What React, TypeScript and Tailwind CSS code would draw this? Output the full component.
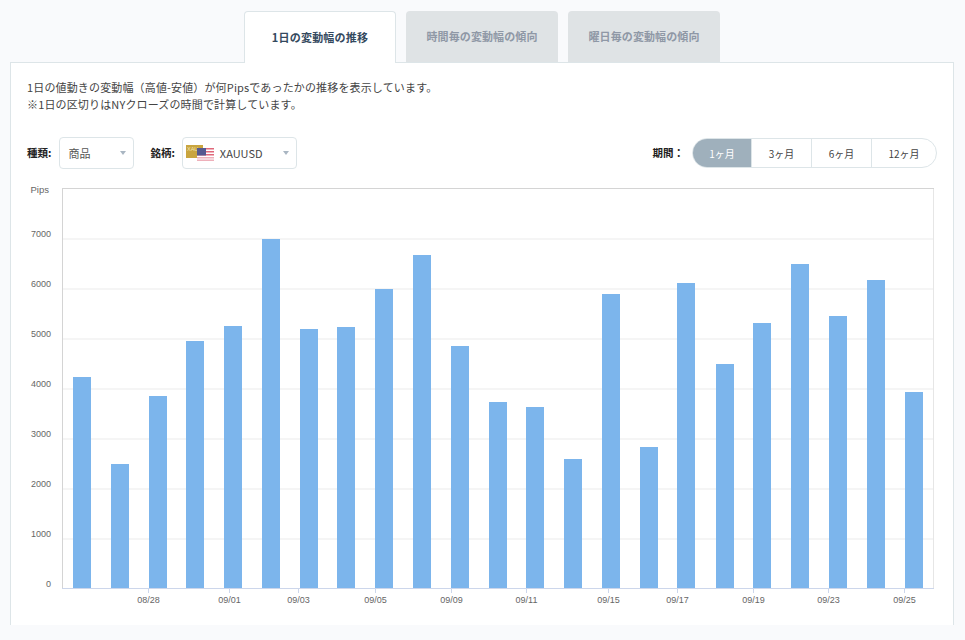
const font = "font-['Noto_Sans_CJK_JP','Noto_Sans',sans-serif]";

const tops = [377, 464, 396, 341, 326, 239, 329, 327, 289, 255, 346, 402, 407, 459, 294, 447, 283, 364, 323, 264, 316, 280, 392];
const barX = [73, 111, 149, 186, 224, 262, 300, 337, 375, 413, 451, 489, 526, 564, 602, 640, 677, 716, 753, 791, 829, 867, 905];
const yLabels = [
  { label: "7000", y: 239 },
  { label: "6000", y: 289 },
  { label: "5000", y: 339 },
  { label: "4000", y: 389 },
  { label: "3000", y: 439 },
  { label: "2000", y: 489 },
  { label: "1000", y: 539 },
];
const xLabels = [
  { label: "08/28", x: 148 },
  { label: "09/01", x: 229 },
  { label: "09/03", x: 298 },
  { label: "09/05", x: 375 },
  { label: "09/09", x: 451 },
  { label: "09/11", x: 526 },
  { label: "09/15", x: 608 },
  { label: "09/17", x: 677 },
  { label: "09/19", x: 753 },
  { label: "09/23", x: 828 },
  { label: "09/25", x: 904 },
];

// chart svg is placed at page x=11, y=180, so coordinates below subtract that
const ox = 11;
const oy = 180;

const Chart = () => (
  <svg width="942" height="440" className="block" fontFamily="'Liberation Sans', sans-serif">
    <rect x={62 - ox} y={188 - oy} width={871} height={400} fill="#fff" />
    {yLabels.map((l) => (
      <g key={l.label}>
        <line x1={62 - ox} x2={933 - ox} y1={l.y - oy} y2={l.y - oy} stroke="#f5f5f5" strokeWidth="2" />
        <text x={51 - ox} y={l.y - oy - 2} fontSize="9" fill="#666" textAnchor="end">{l.label}</text>
      </g>
    ))}
    <text x={49 - ox} y={193 - oy} fontSize="9.5" fill="#666" textAnchor="end">Pips</text>
    <text x={51 - ox} y={587 - oy} fontSize="9" fill="#666" textAnchor="end">0</text>
    {xLabels.map((l) => (
      <g key={l.label}>
        <line x1={l.x - ox + 0.5} x2={l.x - ox + 0.5} y1={588 - oy} y2={593 - oy} stroke="#ccd6eb" />
        <text x={l.x - ox + 0.5} y={603 - oy} fontSize="9" fill="#666" textAnchor="middle">{l.label}</text>
      </g>
    ))}
    {tops.map((t, i) => (
      <rect key={i} x={barX[i] - ox} y={t - oy} width={18} height={588 - t} fill="#7cb5ec" />
    ))}
    <line x1={62.5 - ox} x2={62.5 - ox} y1={188 - oy} y2={588 - oy} stroke="#d4d4d4" />
    <line x1={933.5 - ox} x2={933.5 - ox} y1={188 - oy} y2={588 - oy} stroke="#e6e6e6" />
    <line x1={62 - ox} x2={934 - ox} y1={188.5 - oy} y2={188.5 - oy} stroke="#d4d4d4" />
    <line x1={62 - ox} x2={934 - ox} y1={588.5 - oy} y2={588.5 - oy} stroke="#ccd6eb" />
  </svg>
);

const PairFlag = () => (
  <svg width="28" height="17" viewBox="0 0 28 17" className="shrink-0">
    <rect x="0" y="0" width="17" height="13" fill="#c9a53f" />
    <text x="1" y="6" fontSize="5.5" fill="#f3e4b0" fontFamily="'Liberation Sans', sans-serif">XAU</text>
    <rect x="11" y="3" width="17" height="13" fill="#fff" />
    <rect x="11" y="3" width="17" height="1.5" fill="#e0687a" />
    <rect x="11" y="6" width="17" height="1.5" fill="#e0687a" />
    <rect x="11" y="9" width="17" height="1.5" fill="#e0687a" />
    <rect x="11" y="12" width="17" height="1.5" fill="#eeb0ba" />
    <rect x="11" y="14.5" width="17" height="1.5" fill="#eeb0ba" />
    <rect x="11" y="3" width="9" height="7.5" fill="#55598f" />
  </svg>
);

const Caret = () => <span className="ml-auto h-0 w-0 border-x-[3px] border-t-[4px] border-x-transparent border-t-[#a9b6c2]" />;

const tabs = ["1日の変動幅の推移", "時間毎の変動幅の傾向", "曜日毎の変動幅の傾向"];
const periods = ["1ヶ月", "3ヶ月", "6ヶ月", "12ヶ月"];

export default function App() {
  return (
    <div className={`${font} h-[640px] w-[965px] overflow-hidden bg-[#f9fafc] pt-[11px] text-[#333]`}>
      {/* --- Tabs --- */}
      <div className="relative z-10 ml-[244px] flex gap-[10px]">
        {tabs.map((tab, i) => (
          <div
            key={tab}
            className={
              i === 0
                ? "flex h-[52px] w-[152px] items-center justify-center rounded-t border border-b-0 border-[#dde5e8] bg-white text-[11px] font-bold tracking-[0.2px] text-[#34495e]"
                : "flex h-[51px] w-[152px] items-center justify-center rounded-t bg-[#dfe3e5] text-[11px] font-bold tracking-[0.1px] text-[#8f98a6]"
            }
          >
            {tab}
          </div>
        ))}
      </div>

      {/* --- Panel --- */}
      <div className="-mt-px ml-[10px] h-[563px] w-[944px] border-x border-t border-[#dde5e8] bg-white">
        <div className="px-4 pt-[16px] text-[11px] leading-[17px] tracking-[0.15px] text-[#444]">
          <p>1日の値動きの変動幅（高値-安値）が何Pipsであったかの推移を表示しています。</p>
          <p>※1日の区切りはNYクローズの時間で計算しています。</p>
        </div>

        {/* --- Filters --- */}
        <div className="mt-[24px] flex h-[32px] items-center pl-4 pr-4 text-[11px]">
          <span className="text-[10.5px] font-bold text-[#222]">種類:</span>
          <div className="ml-[8px] flex h-[32px] w-[75px] items-center rounded border border-[#dde5e8] pl-[8px] pr-[7px] text-[#555]">
            商品
            <Caret />
          </div>
          <span className="ml-[16px] text-[10.5px] font-bold text-[#222]">銘柄:</span>
          <div className="ml-[7px] flex h-[32px] w-[115px] items-center rounded border border-[#dde5e8] pl-[3px] pr-[7px] text-[#444]">
            <PairFlag />
            <span className="ml-[6px]">XAUUSD</span>
            <Caret />
          </div>
          <span className="ml-auto text-[10.5px] font-bold text-[#222]">期間：</span>
          <div className="ml-[8px] flex h-[30px] w-[245px] overflow-hidden rounded-full border border-[#dde5e8] text-[10px]">
            {periods.map((p, i) => (
              <div
                key={p}
                className={
                  i === 0
                    ? "flex w-[58px] items-center justify-center bg-[#9fb0bc] text-white"
                    : i === 3
                      ? "flex flex-1 items-center justify-center border-l border-[#dde5e8] text-[#444]"
                      : "flex w-[60px] items-center justify-center border-l border-[#dde5e8] text-[#444]"
                }
              >
                {p}
              </div>
            ))}
          </div>
        </div>

        {/* --- Chart --- */}
        <div className="mt-[11px]">
          <Chart />
        </div>
      </div>
    </div>
  );
}
